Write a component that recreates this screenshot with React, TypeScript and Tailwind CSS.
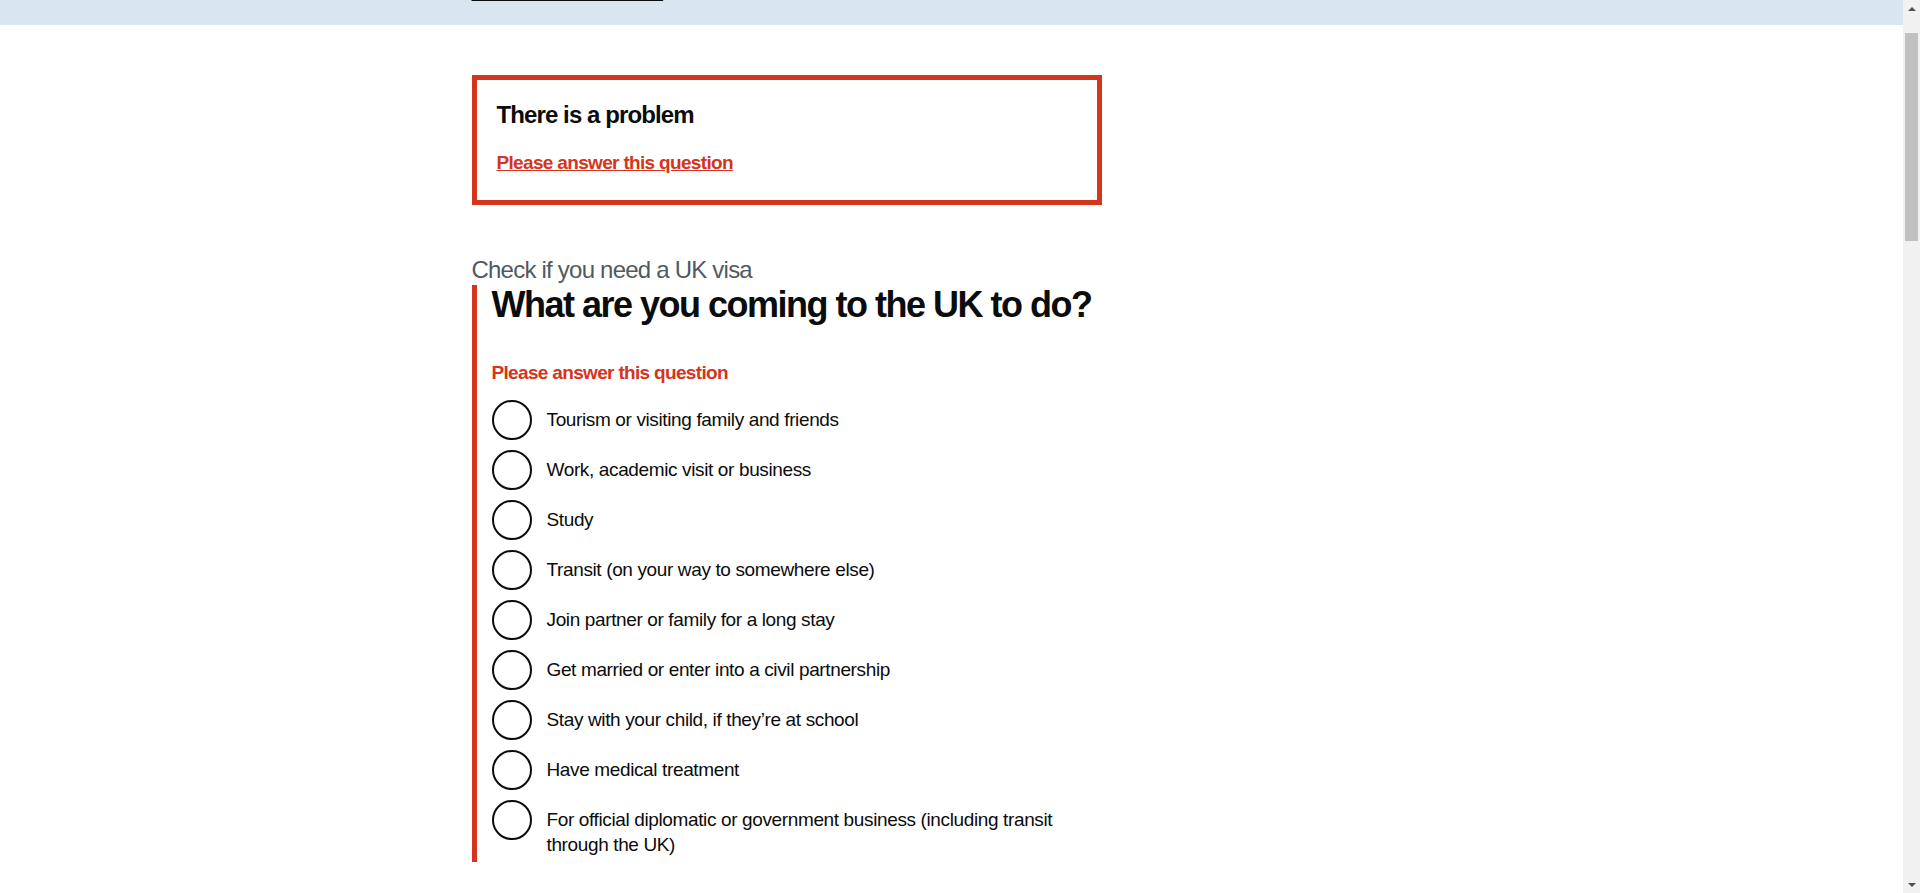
import React from 'react';

const options = [
  'Tourism or visiting family and friends',
  'Work, academic visit or business',
  'Study',
  'Transit (on your way to somewhere else)',
  'Join partner or family for a long stay',
  'Get married or enter into a civil partnership',
  'Stay with your child, if they’re at school',
  'Have medical treatment',
  'For official diplomatic or government business (including transit through the UK)',
];

function Scrollbar() {
  return (
    <div className="w-[17px] h-full bg-[#f1f1f1] flex flex-col items-center shrink-0">
      <div className="h-[17px] w-full flex items-center justify-center">
        <div className="w-0 h-0 border-l-[4px] border-r-[4px] border-b-[4px] border-l-transparent border-r-transparent border-b-[#505050]" />
      </div>
      <div className="mt-[16px] w-[13px] h-[208px] bg-[#c1c1c1]" />
      <div className="flex-1" />
      <div className="h-[17px] w-full flex items-center justify-center">
        <div className="w-0 h-0 border-l-[4px] border-r-[4px] border-t-[4px] border-l-transparent border-r-transparent border-t-[#505050]" />
      </div>
    </div>
  );
}

export default function App() {
  return (
    <div
      className="flex h-[893px] w-full overflow-hidden bg-white text-[#0b0c0c]"
      style={{ fontFamily: '"Liberation Sans", Arial, sans-serif' }}
    >
      <div className="flex-1 min-w-0">
        {/* banner, scrolled mostly out of view */}
        <div className="h-[25px] bg-[#d9e6f1] overflow-hidden">
          <div className="w-[960px] mx-auto -mt-[18px] text-[16px] leading-[20px] tracking-[-0.3px] whitespace-nowrap">
            <a className="underline underline-offset-[3px] text-[#0b0c0c]">Help us improve this service</a>
            <span> — tell us about your experience using this service so we can make it better for everyone.</span>
          </div>
        </div>

        <div className="w-[960px] mx-auto">
          <div className="w-[630px]">
            {/* error summary */}
            <div className="mt-[50px] border-[5px] border-[#d4351c] px-[20px] pt-[20px] pb-[25px]">
              <h2 className="text-[24px] leading-[30px] font-bold tracking-[-0.9px] mb-[20px]">There is a problem</h2>
              <a className="block text-[19px] leading-[25px] font-bold text-[#d4351c] underline tracking-[-0.67px]">
                Please answer this question
              </a>
            </div>

            <div className="mt-[50px] text-[24px] leading-[30px] text-[#505a5f] tracking-[-0.78px]">
              Check if you need a UK visa
            </div>

            {/* form group with error */}
            <div className="border-l-[5px] border-[#d4351c] pl-[15px] pb-[2px]">
              <h1 className="text-[36px] leading-[40px] font-bold tracking-[-1.5px] mb-[35px]">
                What are you coming to the UK to do?
              </h1>
              <p className="text-[19px] leading-[25px] font-bold text-[#d4351c] tracking-[-0.67px] mb-[15px]">
                Please answer this question
              </p>
              <div className="flex flex-col gap-[10px]">
                {options.map((opt) => (
                  <label key={opt} className="flex items-start min-h-[40px]">
                    <span className="w-[40px] h-[40px] rounded-full border-2 border-[#0b0c0c] shrink-0 bg-white" />
                    <span className="px-[15px] pt-[7px] pb-[3px] text-[19px] leading-[25px] tracking-[-0.37px]">{opt}</span>
                  </label>
                ))}
              </div>
            </div>
          </div>
        </div>
      </div>
      <Scrollbar />
    </div>
  );
}
